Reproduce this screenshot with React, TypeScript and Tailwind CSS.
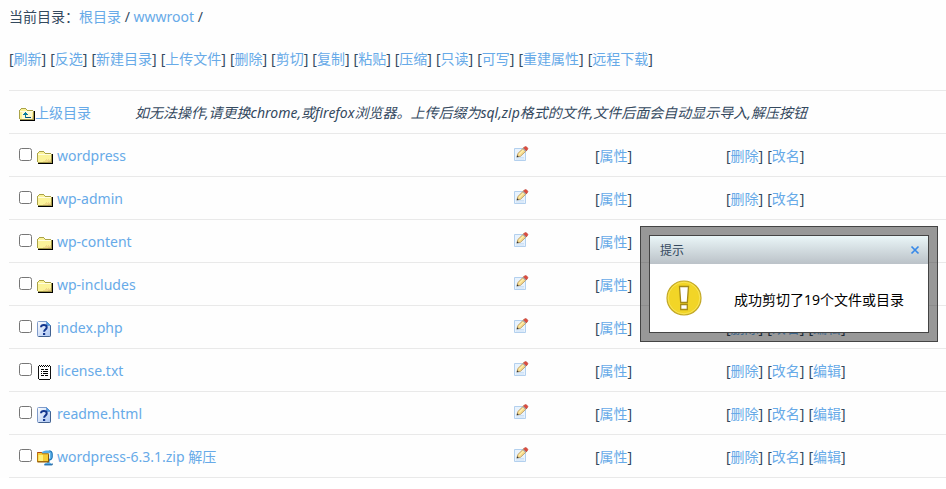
import type { ReactNode } from "react";

const TOOLS = ["刷新", "反选", "新建目录", "上传文件", "删除", "剪切", "复制", "粘贴", "压缩", "只读", "可写", "重建属性", "远程下载"];

const FILES = [
  { name: "wordpress", type: "folder" },
  { name: "wp-admin", type: "folder" },
  { name: "wp-content", type: "folder" },
  { name: "wp-includes", type: "folder" },
  { name: "index.php", type: "unknown" },
  { name: "license.txt", type: "text" },
  { name: "readme.html", type: "unknown" },
  { name: "wordpress-6.3.1.zip", type: "zip" },
];

function FolderIcon({ up = false }: { up?: boolean }) {
  return (
    <svg className="mt-0.5 h-4 w-4 shrink-0" viewBox="0 0 16 16" shapeRendering="crispEdges" aria-hidden="true">
      <path d="M1 4h1v-1h5v1h1v1h6v9H1z" fill="#fbf39a" />
      <path d="M9 10h1v1h1v-1h1v1h1v-1h1v4H4v-1h2v-1h2v-1h1z" fill="#f0da88" />
      <path d="M11 12h3v2H8v-1h3z" fill="#e3c184" />
      <path d="M0 4h1v9H0zM1 3h1v1H1zM2 2h5v1H2zM7 3h1v1H7zM8 4h6v1H8z" fill="#aaa348" />
      <path d="M1 5h13v1H1z" fill="#fffde0" />
      <path d="M14 5h1v9H1v-1h13z" fill="#a39a4a" />
      <path d="M15 5h1v10H1v-1h14z" fill="#000" />
      {up && (
        <>
          <path d="M3 6h10v7H3z" fill="#fffbd2" />
          <path d="M6 6h1v1h1v1h1v1H7v2h5v1H6V9H4V8h1V7h1z" fill="#087b9e" />
          <path d="M7 11h5v1H7z" fill="#064e79" />
        </>
      )}
    </svg>
  );
}

function UnknownIcon() {
  return (
    <svg className="mt-0.5 h-4 w-4 shrink-0" viewBox="0 0 16 16" aria-hidden="true">
      <defs>
        <linearGradient id="unknown-page" x1="0" y1="0" x2="1" y2="1">
          <stop offset="0" stopColor="#fff" />
          <stop offset="1" stopColor="#a9c4f2" />
        </linearGradient>
      </defs>
      <path d="M.5 1.5q0-1 1-1h8l4 4v10q0 1-1 1h-11q-1 0-1-1z" fill="url(#unknown-page)" stroke="#7f9bca" />
      <path d="M13.5 4.5v10q0 1-1 1h-11" fill="none" stroke="#42618f" />
      <path d="M9.5.5v4h4z" fill="#529be2" stroke="#4b88ca" strokeWidth=".6" />
      <path d="M4 6.3C4.2 3.4 9.7 3.3 9.7 6.4c0 2-2.6 2.1-2.6 4.3" fill="none" stroke="#12358e" strokeWidth="2" />
      <path d="M6 12h2.2v2H6z" fill="#12358e" />
    </svg>
  );
}

function TextIcon() {
  return (
    <svg className="mt-0.5 h-4 w-4 shrink-0" viewBox="0 0 16 16" shapeRendering="crispEdges" aria-hidden="true">
      <path d="M2 2h11v13H2z" fill="#fff" />
      <path d="M1 2h1v13H1zM2 15h11v1H2zM13 2h1v13h-1z" fill="#111" />
      <path d="M2 1h1v1H2zM4 1h1v1H4zM6 1h1v1H6zM8 1h1v1H8zM10 1h1v1h-1zM12 1h1v1h-1zM3 2h1v1H3zM5 2h1v1H5zM7 2h1v1H7zM9 2h1v1H9zM11 2h1v1h-1z" fill="#000" />
      <path d="M4 5h3v1H4zM8 5h3v1H8zM4 7h1v1H4zM6 7h5v1H6zM4 9h1v1H4zM6 9h5v1H6zM4 11h3v1H4zM8 11h3v1H8z" fill="#000" />
    </svg>
  );
}

function ZipIcon() {
  return (
    <svg className="mt-0.5 h-4 w-4 shrink-0" viewBox="0 0 16 16" aria-hidden="true">
      <path d="M5 2Q7 .5 9 .5h3.5q3 0 3 3.2v3.6q0 3-3.5 3.2v2.2h1q2 0 2 2.6H7q0-2.6 3-2.6V4H5z" fill="#58aee8" />
      <path d="M12.5.8q2.7.2 2.7 3v3.4q0 2.7-3.2 3v2.6" fill="none" stroke="#1d6fae" />
      <path d="M12.3 3v5.5" stroke="#d3f0ff" strokeWidth="1.5" />
      <path d="M7.5 14.8h7.8v-1.3" fill="none" stroke="#1d5f9a" />
      <path d="M.5 2.5h4l1 1.3h6v8H.5z" fill="#f6ce38" stroke="#bc7a0c" />
      <path d="M1.5 5h4.5v6H1.5z" fill="#fff17b" />
      <path d="M.5 2.5h4.2" stroke="#b14218" />
      <path d="M.5 11.8h11v-7" fill="none" stroke="#8a5606" />
    </svg>
  );
}

function PencilIcon() {
  return (
    <svg className="h-4 w-4" viewBox="0 0 16 16" aria-hidden="true">
      <path d="M1.5 2.5h11v12h-11z" fill="#e9f3fd" stroke="#b3d0ee" />
      <path d="M3 11.5h8M3 13h8" stroke="#cde1f6" />
      <path d="m4 11 .8-3.4L11 1.5l2.8 2.8-6.3 6z" fill="#f7d98a" stroke="#b3935a" strokeWidth=".8" />
      <path d="m6 8.5 5-5" stroke="#fff0ad" strokeWidth="1.2" />
      <path d="m10.3 2.2 1.6-1.5q.8-.6 1.5 0l1.2 1.2q.7.8 0 1.5L13 5z" fill="#dc4b3e" stroke="#b9342d" strokeWidth=".5" />
      <path d="m9.7 2.9.8-.8 2.8 2.8-.8.8z" fill="#a3a6ad" />
      <path d="m3.7 11.3.5-2 1.6 1.5z" fill="#333" />
    </svg>
  );
}

function NoticeIcon() {
  return (
    <svg className="h-9 w-9 shrink-0" viewBox="0 0 36 36" aria-hidden="true">
      <circle cx="18" cy="18" r="17" fill="#f2d527" stroke="#c2a829" strokeWidth="1.2" />
      <circle cx="18" cy="18" r="15.8" fill="none" stroke="#f8e458" />
      <path d="M13.5 6.5h9l-1.2 16h-6.6z" fill="#fff" stroke="#a48a17" strokeWidth="1.3" />
      <path d="M14.7 24.5h6.6v5h-6.6z" fill="#fff" stroke="#a48a17" strokeWidth="1.3" />
    </svg>
  );
}

function FileIcon({ type }: { type: string }) {
  if (type === "folder") return <FolderIcon />;
  if (type === "text") return <TextIcon />;
  if (type === "zip") return <ZipIcon />;
  return <UnknownIcon />;
}

function Link({ children }: { children: ReactNode }) {
  return <a href="#" className="text-[#67aae8]">{children}</a>;
}

function Action({ children }: { children: ReactNode }) {
  return <span className="whitespace-nowrap">[<Link>{children}</Link>]</span>;
}

function Notice() {
  return (
    <div role="dialog" aria-labelledby="notice-title" className="absolute top-[226px] right-2 w-[298px] border border-[#444] bg-black/40 p-2">
      <div className="border border-[#444] bg-white">
        <div className="flex h-7 items-center justify-between bg-linear-to-b from-[#eaf6f8] to-[#bbc2c8] pr-1 pl-2.5">
          <h2 id="notice-title" className="pt-0.5 text-xs">提示</h2>
          <button type="button" aria-label="关闭" className="p-1">
            <svg className="h-2.5 w-2.5" viewBox="0 0 10 10" aria-hidden="true">
              <path d="m1.5 1.5 7 7m0-7-7 7" stroke="#3889e8" strokeWidth="1.7" />
            </svg>
          </button>
        </div>
        <div className="flex h-[68px] items-center gap-8 pl-4 text-black">
          <NoticeIcon />
          <p className="pt-1">成功剪切了19个文件或目录</p>
        </div>
      </div>
    </div>
  );
}

export default function App() {
  return (
    <main className="relative bg-[#fefefe] pt-[7px] pl-[9px] font-['Noto_Sans','Noto_Sans_CJK_SC',sans-serif] text-sm leading-5 text-[#34495e]">
      <nav>
        当前目录：<Link>根目录</Link> / <Link>wwwroot</Link> /
      </nav>
      <div className="mt-[22px] flex flex-wrap gap-1">
        {TOOLS.map((tool) => (
          <Action key={tool}>{tool}</Action>
        ))}
      </div>
      <table className="mt-[21px] w-full table-fixed border-collapse border-y border-[#e9e9e9]">
        <colgroup>
          <col className="w-[500px]" />
          <col className="w-[82px]" />
          <col className="w-[131px]" />
          <col />
        </colgroup>
        <tbody>
          <tr className="h-[43px]">
            <td colSpan={4} className="pt-0.5 pl-2.5">
              <div className="flex items-center">
                <a href="#" className="flex w-[116px] items-center text-[#67aae8]">
                  <FolderIcon up />
                  上级目录
                </a>
                <em>如无法操作,请更换chrome,或firefox浏览器。上传后缀为sql,zip格式的文件,文件后面会自动显示导入,解压按钮</em>
              </div>
            </td>
          </tr>
          {FILES.map((file) => (
            <tr key={file.name} className="h-[43px] border-t border-[#e9e9e9]">
              <td className="pt-0.5 pl-2.5">
                <div className="flex items-center">
                  <input type="checkbox" aria-label={file.name} className="mr-[5px] mb-1 h-[13px] w-[13px]" />
                  <FileIcon type={file.type} />
                  <span className="ml-1">
                    <Link>{file.name}</Link>
                    {file.type === "zip" && <> <Link>解压</Link></>}
                  </span>
                </div>
              </td>
              <td className="pb-1 pl-1">
                <a href="#" aria-label="编辑" className="inline-block align-middle"><PencilIcon /></a>
              </td>
              <td className="pt-0.5 pl-1"><Action>属性</Action></td>
              <td className="pt-0.5 pl-1">
                <div className="flex gap-1">
                  <Action>删除</Action>
                  <Action>改名</Action>
                  {file.type !== "folder" && <Action>编辑</Action>}
                </div>
              </td>
            </tr>
          ))}
        </tbody>
      </table>
      <Notice />
    </main>
  );
}
